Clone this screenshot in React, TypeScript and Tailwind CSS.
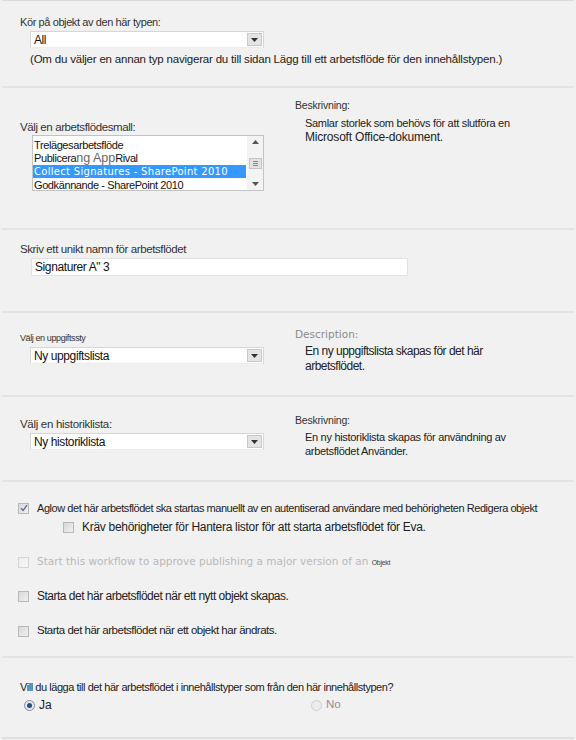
import React from "react";

function Caret() {
  return (
    <svg width="7" height="4" viewBox="0 0 7 4" aria-hidden="true">
      <polygon points="0,0 7,0 3.5,4" fill="#333" />
    </svg>
  );
}

function Dropdown({ value, width = "w-[234px]" }: { value: string; width?: string }) {
  return (
    <div className={`${width} h-[17px] bg-white border border-[#d6d6d6] border-b-[#ececec] flex items-center justify-between pl-[3px] pr-[1px]`}>
      <span className="text-[12px] leading-none tracking-[-0.4px] text-[#111]">{value}</span>
      <span className="w-[15px] h-[13px] bg-[#e4e4e4] border border-[#c9c9c9] flex items-center justify-center">
        <Caret />
      </span>
    </div>
  );
}

function Checkbox({ checked = false, faded = false }: { checked?: boolean; faded?: boolean }) {
  return (
    <span
      className={`w-[11px] h-[11px] shrink-0 border flex items-center justify-center bg-gradient-to-br ${
        faded ? "border-[#d4d4d4] from-[#ededed] to-[#f6f6f6]" : "border-[#b8b8b8] from-[#d8d8d8] to-[#f0f0f0]"
      }`}
    >
      {checked && (
        <svg width="8" height="8" viewBox="0 0 8 8" aria-hidden="true">
          <path d="M1 4.2 L3.1 6.4 L7 1.2" stroke="#5a6d8c" strokeWidth="1.3" fill="none" />
        </svg>
      )}
    </span>
  );
}

function Radio({ checked = false }: { checked?: boolean }) {
  return (
    <span
      className={`w-[11px] h-[11px] rounded-full border flex items-center justify-center ${
        checked ? "border-[#7f8da3] bg-[#e4e8ee]" : "border-[#cfcfcf] bg-[#ececec]"
      }`}
    >
      {checked && <span className="w-[5px] h-[5px] rounded-full bg-[#2f4a74]" />}
    </span>
  );
}

function ListBox() {
  return (
    <div className="w-[232px] h-[56px] bg-white border border-[#c3c3c3] flex overflow-hidden">
      <div className="flex-1 pt-[3px] text-[11px] leading-[13px] tracking-[-0.4px] text-[#111] whitespace-nowrap">
        <div className="pl-[1px]">Trelägesarbetsflöde</div>
        <div className="pl-[1px] h-[13px] flex items-center">
          <span>Publicera</span>
          <span className="text-[12.5px] text-[#666] tracking-normal leading-[13px]">ng App</span>
          <span>Rival</span>
        </div>
        <div className="bg-[#3399ff] text-white font-['DejaVu_Sans',sans-serif] text-[10px] leading-[13px] pl-[1px] tracking-[0.3px] mr-[1px]">
          Collect Signatures - SharePoint 2010
        </div>
        <div className="pl-[1px] pt-[1px]">Godkännande - SharePoint 2010</div>
      </div>
      <div className="w-[16px] bg-[#f3f3f3] flex flex-col items-center justify-between py-[4px]">
        <svg width="7" height="4" viewBox="0 0 7 4" aria-hidden="true">
          <polygon points="0,4 7,4 3.5,0" fill="#555" />
        </svg>
        <span className="w-[13px] h-[11px] bg-[#e2e2e2] border border-[#c4c4c4] flex flex-col items-center justify-center gap-[1px]">
          <span className="w-[5px] h-px bg-[#888]" />
          <span className="w-[5px] h-px bg-[#888]" />
          <span className="w-[5px] h-px bg-[#888]" />
        </span>
        <svg width="7" height="4" viewBox="0 0 7 4" aria-hidden="true">
          <polygon points="0,0 7,0 3.5,4" fill="#555" />
        </svg>
      </div>
    </div>
  );
}

export default function App() {
  return (
    <div className="w-[576px] h-[740px] bg-[#f1f1f1] font-['Liberation_Sans',Arial,sans-serif] text-[#222]">
      <div className="mx-[2px] border-t border-[#dcdcdc]">
        {/* content type */}
        <section className="h-[87px] border-b-2 border-[#e3e3e3] pl-[18px] pt-[14px]">
          <div className="text-[11px] leading-[14px] tracking-[-0.4px] text-[#333]">Kör på objekt av den här typen:</div>
          <div className="ml-[10px] mt-[2px]">
            <Dropdown value="All" />
          </div>
          <div className="ml-[10px] mt-[4px] text-[11.5px] leading-[14px] tracking-[-0.2px] text-[#222]">
            (Om du väljer en annan typ navigerar du till sidan Lägg till ett arbetsflöde för den innehållstypen.)
          </div>
        </section>

        {/* template */}
        <section className="h-[142px] border-b-2 border-[#e3e3e3] pl-[18px] grid grid-cols-[275px_1fr]">
          <div className="pt-[32px]">
            <div className="text-[11.5px] leading-[14px] tracking-[-0.4px] text-[#333]">Välj en arbetsflödesmall:</div>
            <div className="ml-[12px] mt-[1px]">
              <ListBox />
            </div>
          </div>
          <div className="pt-[10px]">
            <div className="text-[10.5px] leading-[14px] tracking-[-0.2px] text-[#333]">Beskrivning:</div>
            <div className="ml-[10px] mt-[4px] text-[11px] leading-[14px] tracking-[-0.3px] text-[#222]">
              <div>Samlar storlek som behövs för att slutföra en</div>
              <div className="text-[12px] tracking-[-0.2px]">Microsoft Office-dokument.</div>
            </div>
          </div>
        </section>

        {/* name */}
        <section className="h-[83px] border-b-2 border-[#e3e3e3] pl-[18px] pt-[12px]">
          <div className="text-[11.5px] leading-[14px] tracking-[-0.4px] text-[#333]">Skriv ett unikt namn för arbetsflödet</div>
          <div className="ml-[11px] mt-[2px] w-[377px] h-[18px] bg-white border border-[#e2e2e2] flex items-center pl-[3px]">
            <span className="text-[12px] tracking-[-0.4px] text-[#111]">Signaturer A" 3</span>
          </div>
        </section>

        {/* task list */}
        <section className="h-[84px] border-b-2 border-[#e3e3e3] pl-[18px] grid grid-cols-[275px_1fr]">
          <div className="pt-[19px]">
            <div className="text-[9px] leading-[12px] tracking-[-0.4px] text-[#333]">Välj en uppgiftssty</div>
            <div className="ml-[10px] mt-[3px]">
              <Dropdown value="Ny uppgiftslista" />
            </div>
          </div>
          <div className="pt-[14px]">
            <div className="font-['DejaVu_Sans',sans-serif] text-[10.5px] leading-[14px] text-[#8a8a8a]">Description:</div>
            <div className="ml-[10px] mt-[3px] text-[12px] leading-[15px] tracking-[-0.5px] text-[#222]">
              <div>En ny uppgiftslista skapas för det här</div>
              <div>arbetsflödet.</div>
            </div>
          </div>
        </section>

        {/* history list */}
        <section className="h-[85px] border-b-2 border-[#e3e3e3] pl-[18px] grid grid-cols-[275px_1fr]">
          <div className="pt-[20px]">
            <div className="text-[11.5px] leading-[14px] tracking-[-0.3px] text-[#333]">Välj en historiklista:</div>
            <div className="ml-[10px] mt-[2px]">
              <Dropdown value="Ny historiklista" />
            </div>
          </div>
          <div className="pt-[16px]">
            <div className="text-[10.5px] leading-[14px] tracking-[-0.2px] text-[#333]">Beskrivning:</div>
            <div className="ml-[10px] mt-[3px] text-[11px] leading-[14px] tracking-[-0.3px] text-[#222]">
              <div>En ny historiklista skapas för användning av</div>
              <div>arbetsflödet Använder.</div>
            </div>
          </div>
        </section>

        {/* start options */}
        <section className="h-[176px] border-b-2 border-[#e3e3e3] pl-[16px] pt-[19px] flex flex-col">
          <div className="flex items-center gap-[8px] h-[14px]">
            <Checkbox checked />
            <span className="text-[11px] tracking-[-0.45px] text-[#222]">
              Aglow det här arbetsflödet ska startas manuellt av en autentiserad användare med behörigheten Redigera objekt
            </span>
          </div>
          <div className="flex items-center gap-[8px] h-[14px] mt-[5px] ml-[45px]">
            <Checkbox />
            <span className="text-[12px] tracking-[-0.3px] text-[#222]">
              Kräv behörigheter för Hantera listor för att starta arbetsflödet för Eva.
            </span>
          </div>
          <div className="flex items-center gap-[8px] h-[14px] mt-[21px]">
            <Checkbox faded />
            <span className="font-['DejaVu_Sans',sans-serif] text-[10.5px] text-[#b9b9b9]">
              Start this workflow to approve publishing a major version of an{" "}
              <span className="font-['Liberation_Sans',sans-serif] text-[7px] text-[#444] tracking-[-0.3px]">Objekt</span>
            </span>
          </div>
          <div className="flex items-center gap-[8px] h-[14px] mt-[20px]">
            <Checkbox />
            <span className="text-[12px] tracking-[-0.5px] text-[#222]">Starta det här arbetsflödet när ett nytt objekt skapas.</span>
          </div>
          <div className="flex items-center gap-[8px] h-[14px] mt-[21px]">
            <Checkbox />
            <span className="text-[11.5px] tracking-[-0.5px] text-[#222]">Starta det här arbetsflödet när ett objekt har ändrats.</span>
          </div>
        </section>

        {/* content type inheritance */}
        <section className="h-[81px] border-b-2 border-[#dedede] pl-[18px] pt-[22px]">
          <div className="text-[11px] leading-[14px] tracking-[-0.45px] text-[#222]">
            Vill du lägga till det här arbetsflödet i innehållstyper som från den här innehållstypen?
          </div>
          <div className="grid grid-cols-[291px_1fr] mt-[2px]">
            <label className="flex items-center gap-[4px] pl-[4px]">
              <Radio checked />
              <span className="text-[12px] text-[#222]">Ja</span>
            </label>
            <label className="flex items-center gap-[4px]">
              <Radio />
              <span className="text-[11.5px] text-[#8f8f8f]">No</span>
            </label>
          </div>
        </section>
      </div>
    </div>
  );
}
